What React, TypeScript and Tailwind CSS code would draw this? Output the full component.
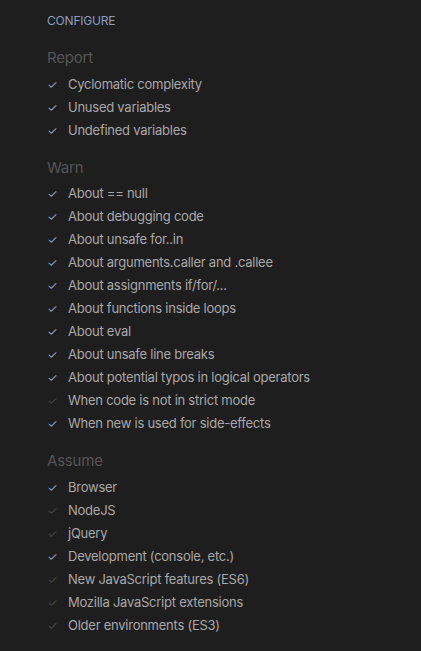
import React from "react";

type Item = [string, boolean];
const sections: { title: string; items: Item[] }[] = [
  {
    title: "Report",
    items: [
      ["Cyclomatic complexity", true],
      ["Unused variables", true],
      ["Undefined variables", true],
    ],
  },
  {
    title: "Warn",
    items: [
      ["About == null", true],
      ["About debugging code", true],
      ["About unsafe for..in", true],
      ["About arguments.caller and .callee", true],
      ["About assignments if/for/...", true],
      ["About functions inside loops", true],
      ["About eval", true],
      ["About unsafe line breaks", true],
      ["About potential typos in logical operators", true],
      ["When code is not in strict mode", false],
      ["When new is used for side-effects", true],
    ],
  },
  {
    title: "Assume",
    items: [
      ["Browser", true],
      ["NodeJS", false],
      ["jQuery", false],
      ["Development (console, etc.)", true],
      ["New JavaScript features (ES6)", false],
      ["Mozilla JavaScript extensions", false],
      ["Older environments (ES3)", false],
    ],
  },
];

export default function App() {
  return (
    <div
      className="min-h-[651px] w-full bg-[#1e1e1e] pl-[47px] pt-[13px]"
      style={{ fontFamily: "Inter, 'Noto Sans', sans-serif" }}
    >
      <div className="text-[12px] leading-[16px] text-[#8d9cc0] tracking-[-0.2px]">CONFIGURE</div>
      <div className="mt-[17px] flex flex-col gap-[13.5px]">
        {sections.map((s) => (
          <div key={s.title}>
            <div className="text-[15px] leading-[24px] text-[#555555] tracking-[-0.2px]">{s.title}</div>
            <div className="mt-[3px] flex flex-col">
              {s.items.map(([label, on]) => (
                <div key={label} className="flex h-[23px] items-center">
                  <span
                    className={
                      "w-[21px] text-[12px] " + (on ? "text-[#8d9cc0]" : "text-[#444444]")
                    }
                  >
                    ✓
                  </span>
                  <span className="text-[13px] tracking-[-0.25px] text-[#a8a8a8]">{label}</span>
                </div>
              ))}
            </div>
          </div>
        ))}
      </div>
    </div>
  );
}
